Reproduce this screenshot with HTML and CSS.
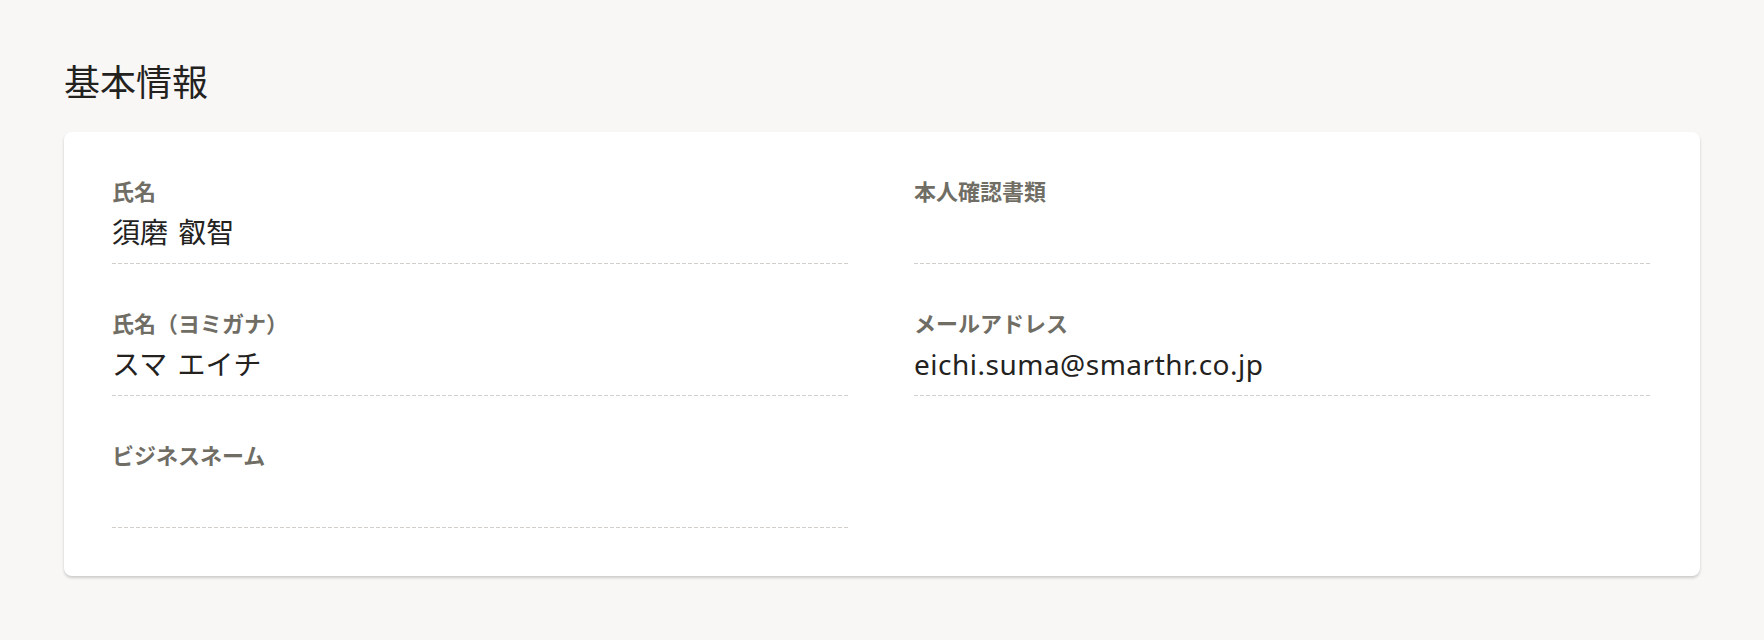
FILE: index.html
```html
<!DOCTYPE html>
<html lang="ja">
<head>
<meta charset="utf-8">
<title>基本情報</title>
<link rel="stylesheet" href="styles.css">
</head>
<body>
<main class="page">
  <h1 class="page-title">基本情報</h1>
  <section class="card">
    <dl class="fields">
      <div class="field">
        <dt class="field-label">氏名</dt>
        <dd class="field-value">須磨 叡智</dd>
      </div>
      <div class="field">
        <dt class="field-label">本人確認書類</dt>
        <dd class="field-value"></dd>
      </div>
      <div class="field">
        <dt class="field-label">氏名（ヨミガナ）</dt>
        <dd class="field-value">スマ エイチ</dd>
      </div>
      <div class="field">
        <dt class="field-label">メールアドレス</dt>
        <dd class="field-value field-value--latin">eichi.suma@smarthr.co.jp</dd>
      </div>
      <div class="field">
        <dt class="field-label">ビジネスネーム</dt>
        <dd class="field-value"></dd>
      </div>
    </dl>
  </section>
</main>
</body>
</html>
```

FILE: styles.css
```css
* {
  box-sizing: border-box;
}

html, body {
  margin: 0;
  padding: 0;
}

body {
  background: #f8f7f6;
  color: #23221e;
  font-family: "Noto Sans", "Noto Sans CJK JP", sans-serif;
  width: 1764px;
  height: 640px;
  overflow: hidden;
}

.page {
  padding: 59px 64px 0 64px;
}

.page-title {
  margin: 0 0 25px 0;
  font-size: 36px;
  line-height: 48px;
  font-weight: 400;
  color: #23221e;
}

.card {
  background: #ffffff;
  border-radius: 8px;
  box-shadow: 0 2px 3px rgba(0, 0, 0, 0.18);
  padding: 44px 48px 48px 48px;
}

.fields {
  margin: 0;
  display: grid;
  grid-template-columns: 1fr 1fr;
  column-gap: 64px;
  row-gap: 44px;
}

.field {
  background-image: repeating-linear-gradient(to right, #d1cecb 0 4px, transparent 4px 6px);
  background-size: 100% 1px;
  background-repeat: no-repeat;
  background-position: left bottom;
  padding-bottom: 10px;
}

.field-label {
  margin: 0;
  font-size: 22px;
  line-height: 30px;
  font-weight: 700;
  color: #706d65;
}

.field-value {
  margin: 4px 0 0 0;
  height: 44px;
  font-size: 28px;
  line-height: 44px;
  word-spacing: 3px;
  color: #23221e;
}

.field-value--latin {
  letter-spacing: 0.5px;
}
```
